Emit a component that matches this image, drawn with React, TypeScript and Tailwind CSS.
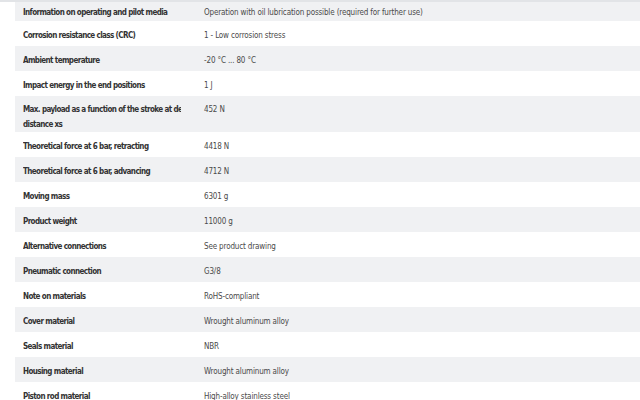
import React from 'react';

interface Spec {
  label: string;
  value: string;
  label2?: string;
}

const specs: Spec[] = [
  { label: 'Information on operating and pilot media', value: 'Operation with oil lubrication possible (required for further use)' },
  { label: 'Corrosion resistance class (CRC)', value: '1 - Low corrosion stress' },
  { label: 'Ambient temperature', value: '-20 °C ... 80 °C' },
  { label: 'Impact energy in the end positions', value: '1 J' },
  { label: 'Max. payload as a function of the stroke at defined', label2: 'distance xs', value: '452 N' },
  { label: 'Theoretical force at 6 bar, retracting', value: '4418 N' },
  { label: 'Theoretical force at 6 bar, advancing', value: '4712 N' },
  { label: 'Moving mass', value: '6301 g' },
  { label: 'Product weight', value: '11000 g' },
  { label: 'Alternative connections', value: 'See product drawing' },
  { label: 'Pneumatic connection', value: 'G3/8' },
  { label: 'Note on materials', value: 'RoHS-compliant' },
  { label: 'Cover material', value: 'Wrought aluminum alloy' },
  { label: 'Seals material', value: 'NBR' },
  { label: 'Housing material', value: 'Wrought aluminum alloy' },
  { label: 'Piston rod material', value: 'High-alloy stainless steel' },
];

const App: React.FC = () => {
  return (
    <div className="w-[640px] h-[400px] overflow-hidden bg-white font-['DejaVu_Sans_Condensed','Liberation_Sans_Narrow',sans-serif] text-[8px] leading-[15px]">
      <div className="h-[2px] bg-[#e2e4e7]" />
      <div className="pl-[15px]">
        {specs.map((spec, index) => {
          const pad = index === 0 ? 'pt-[3px] pb-px' : spec.label2 ? 'pt-[6px] pb-0' : 'pt-[7px] pb-[3px]';
          return (
            <div
              key={index}
              className={`flex ${index % 2 === 0 ? 'bg-[#f0f1f3]' : 'bg-white'} ${pad}`}
            >
              <div className="w-[158px] ml-[8px] shrink-0 overflow-hidden font-bold tracking-[-0.6px] text-[#333333]">
                <div className="whitespace-nowrap">{spec.label}</div>
                {spec.label2 && <div className="whitespace-nowrap">{spec.label2}</div>}
              </div>
              <div className="pl-[23px] tracking-[-0.15px] text-[#4a4a4a]">{spec.value}</div>
            </div>
          );
        })}
      </div>
    </div>
  );
};

export default App;
